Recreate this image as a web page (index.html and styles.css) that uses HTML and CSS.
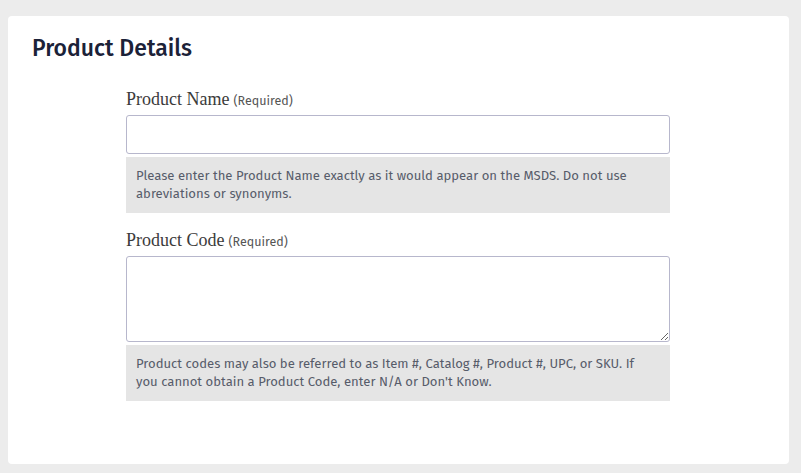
FILE: index.html
```html
<!DOCTYPE html>
<html>
<head>
<meta charset="utf-8">
<link rel="stylesheet" href="styles.css">
</head>
<body>
<div class="card">
  <h1 class="title">Product Details</h1>
  <form class="form">
    <div class="field">
      <label class="label">Product Name<span class="req">(Required)</span></label>
      <input class="input" type="text">
      <div class="help">Please enter the Product Name exactly as it would appear on the MSDS. Do not use abreviations or synonyms.</div>
    </div>
    <div class="field">
      <label class="label">Product Code<span class="req">(Required)</span></label>
      <textarea class="textarea"></textarea>
      <div class="help">Product codes may also be referred to as Item #, Catalog #, Product #, UPC, or SKU. If you cannot obtain a Product Code, enter N/A or Don't Know.</div>
    </div>
  </form>
</div>
</body>
</html>
```
FILE: styles.css
```css
html, body {
  margin: 0;
  padding: 0;
  background: #ececec;
}
body {
  padding: 16px 12px 9px 8px;
  font-family: "Fira Sans", "Open Sans", sans-serif;
}
.card {
  background: #fff;
  border-radius: 4px;
  padding: 20px 25px 46px 24px;
}
.title {
  margin: 0;
  font-family: "Fira Sans", "Open Sans", sans-serif;
  font-weight: 500;
  font-size: 23px;
  color: #1b2238;
  line-height: 24px;
}
.form {
  width: 544px;
  margin: 0 auto;
  padding-top: 29px;
}
.field {
  margin-bottom: 17px;
}
.label {
  display: block;
  height: 20px;
  font-family: "Liberation Serif", serif;
  font-size: 18px;
  color: #3b3b3b;
  line-height: 20px;
  margin-bottom: 6px;
}
.req {
  font-family: "Fira Sans", "Open Sans", sans-serif;
  font-size: 12.5px;
  line-height: 12px;
  color: #555;
  margin-left: 4px;
}
.input, .textarea {
  display: block;
  box-sizing: border-box;
  width: 100%;
  border: 1px solid #b7b7cc;
  border-radius: 3px;
  background: #fff;
  margin: 0;
}
.input {
  height: 39px;
}
.textarea {
  height: 86px;
  resize: vertical;
}
.help {
  margin-top: 3px;
  background: #e5e5e5;
  padding: 10px 20px 10px 10px;
  font-size: 13.1px;
  line-height: 18px;
  color: #575c6a;
}
```
